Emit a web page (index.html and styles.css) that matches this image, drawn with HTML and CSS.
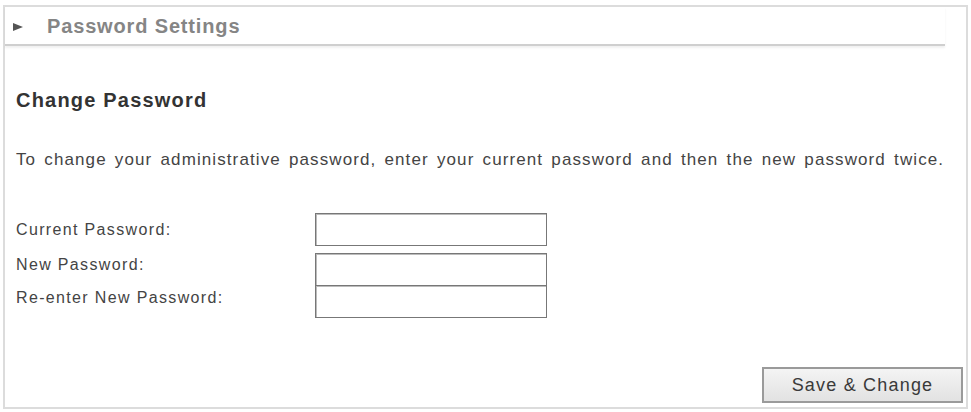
FILE: index.html
```html
<!DOCTYPE html>
<html lang="en">
<head>
    <meta charset="utf-8">
    <title>Password Settings</title>
    <meta name="viewport" content="width=device-width, initial-scale=1">
    <link rel="stylesheet" href="styles.css">
</head>
<body>
    <div class="panel">
        <div class="panel-header">
            <span class="arrow"></span>
            <span class="panel-title">Password Settings</span>
        </div>

        <div class="panel-body">
            <h2>Change Password</h2>
            <p class="intro">To change your administrative password, enter your current password and then the new password twice.</p>

            <form class="pw-form" action="#" method="POST">
                <label for="current" class="first">Current Password:</label>
                <input type="password" id="current" name="current" class="first">

                <label for="newpw" class="second">New Password:</label>
                <input type="password" id="newpw" name="newpw" class="second">

                <label for="repw" class="third">Re-enter New Password:</label>
                <input type="password" id="repw" name="repw" class="third">
            </form>
        </div>

        <div class="panel-footer">
            <button type="submit">Save &amp; Change</button>
        </div>
    </div>
</body>
</html>
```

FILE: styles.css
```css
* {
    margin: 0;
    padding: 0;
    box-sizing: border-box;
}

body {
    background-color: #fff;
    font-family: 'Liberation Sans', Arial, sans-serif;
    color: #444;
}

.panel {
    margin: 5px 0 0 3px;
    width: 965px;
    height: 404px;
    border: 2px solid #dcdcdc;
    display: flex;
    flex-direction: column;
}

.panel-header {
    height: 39px;
    margin-right: 21px;
    padding-left: 8px;
    display: flex;
    align-items: center;
    border-bottom: 2px solid #cfcfcf;
    box-shadow: 0 2px 2px rgba(0, 0, 0, 0.06);
    padding-top: 2px;
}

.arrow {
    width: 0;
    height: 0;
    border-top: 4px solid transparent;
    border-bottom: 4px solid transparent;
    border-left: 10px solid #555;
    margin-right: 24px;
}

.panel-title {
    font-size: 20px;
    font-weight: bold;
    letter-spacing: 0.85px;
    color: #858585;
}

.panel-body {
    padding-left: 11px;
}

h2 {
    margin-top: 42px;
    font-size: 20px;
    line-height: 24px;
    letter-spacing: 1.2px;
    color: #333;
}

.intro {
    margin-top: 38px;
    font-size: 17px;
    line-height: 20px;
    letter-spacing: 1.1px;
    word-spacing: 2.35px;
    color: #444;
}

.pw-form {
    margin-top: 43px;
    display: grid;
    grid-template-columns: 299px 232px;
}

.pw-form label {
    font-size: 16px;
    letter-spacing: 1.35px;
    color: #444;
    align-self: center;
}

.pw-form label.second {
    padding-bottom: 2px;
}

.pw-form label.third {
    padding-bottom: 8px;
}

.pw-form input {
    height: 33px;
    border: 1px solid #777;
    box-shadow: inset 1px 1px 0 #bbb;
    background: #fff;
}

.pw-form input.second {
    margin-top: 7px;
}

.pw-form label.third,
.pw-form input.third {
    margin-top: -1px;
}

.panel-footer {
    margin-top: auto;
    padding: 0 3px 4px 0;
    display: flex;
    justify-content: flex-end;
}

button {
    width: 201px;
    height: 36px;
    border: 2px solid #9a9a9a;
    background: linear-gradient(#f4f4f4, #e2e2e2);
    font-family: 'Liberation Sans', Arial, sans-serif;
    font-size: 18px;
    letter-spacing: 1.2px;
    color: #3a3a3a;
    cursor: pointer;
}
```
